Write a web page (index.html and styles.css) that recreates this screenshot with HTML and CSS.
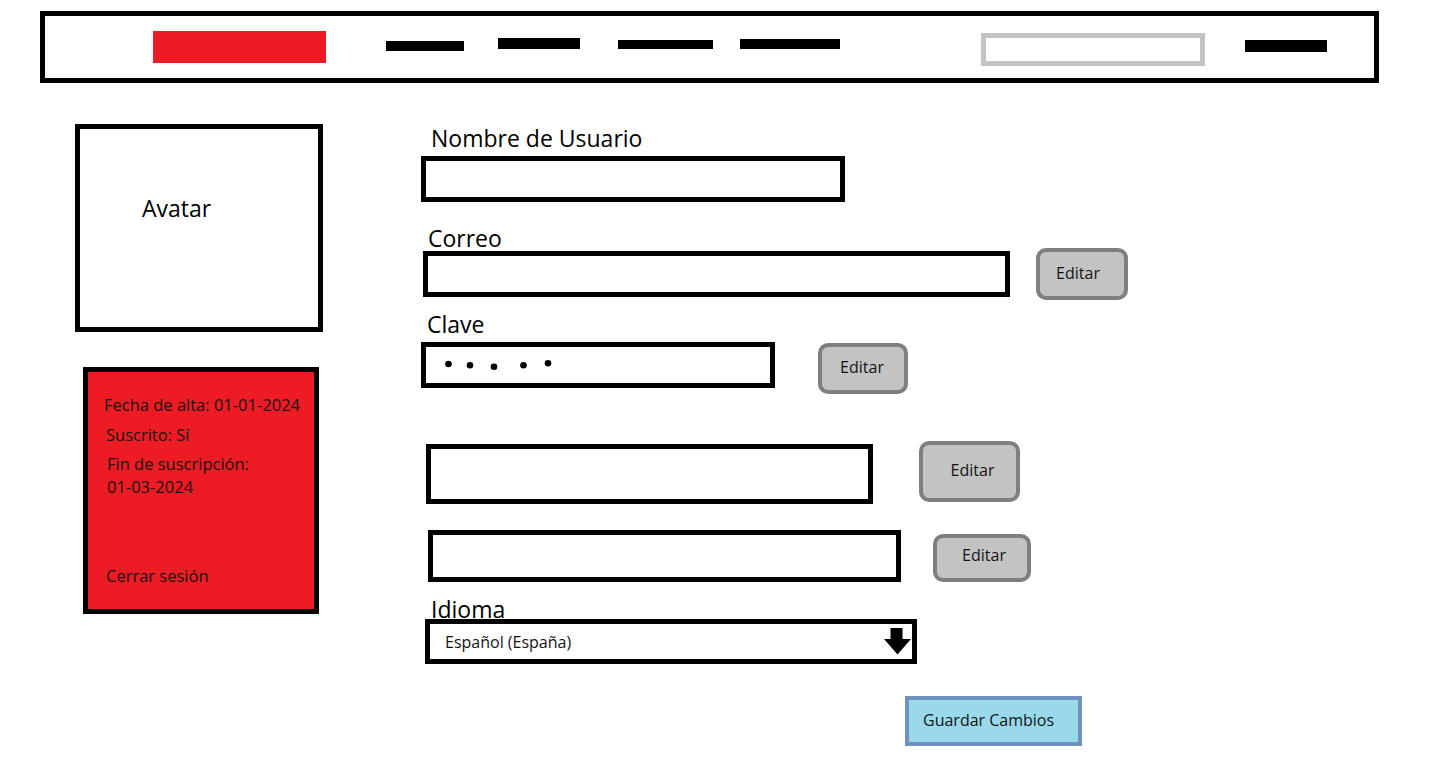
FILE: index.html
```html
<!DOCTYPE html>
<html lang="es">
<head>
<meta charset="utf-8">
<title>Perfil de usuario</title>
<link rel="stylesheet" href="styles.css">
</head>
<body>
<header class="topbar">
  <div class="logo"></div>
  <div class="nav nav-1"></div>
  <div class="nav nav-2"></div>
  <div class="nav nav-3"></div>
  <div class="nav nav-4"></div>
  <div class="search"></div>
  <div class="nav nav-5"></div>
</header>

<main class="page">
  <aside class="sidebar">
    <div class="avatar">Avatar</div>
    <div class="info">
      <div class="info-line l1">Fecha de alta: 01-01-2024</div>
      <div class="info-line l2">Suscrito: Sí</div>
      <div class="info-line l3">Fin de suscripción:<br>01-03-2024</div>
      <div class="info-line logout">Cerrar sesión</div>
    </div>
  </aside>

  <section class="form">
    <div class="label lbl-user">Nombre de Usuario</div>
    <div class="field f-user"></div>

    <div class="label lbl-mail">Correo</div>
    <div class="row row-mail">
      <div class="field f-mail"></div>
      <div class="btn b-mail">Editar</div>
    </div>

    <div class="label lbl-pass">Clave</div>
    <div class="row row-pass">
      <div class="field f-pass">
        <svg class="dots" width="110" height="12" viewBox="0 0 110 12">
          <circle cx="3.5" cy="5" r="3.3"/>
          <circle cx="25" cy="6.3" r="3.3"/>
          <circle cx="49" cy="7.7" r="3.3"/>
          <circle cx="78.5" cy="6.3" r="3.3"/>
          <circle cx="103" cy="4.3" r="3.3"/>
        </svg>
      </div>
      <div class="btn b-pass">Editar</div>
    </div>

    <div class="row row-4">
      <div class="field f-4"></div>
      <div class="btn b-4">Editar</div>
    </div>

    <div class="row row-5">
      <div class="field f-5"></div>
      <div class="btn b-5">Editar</div>
    </div>

    <div class="label lbl-lang">Idioma</div>
    <div class="select">
      <span class="select-text">Español (España)</span>
      <svg class="arrow" width="27" height="27" viewBox="0 0 27 27">
        <rect x="6.5" y="0" width="12" height="12"/>
        <polygon points="0,11 27,11 13.5,26.5"/>
      </svg>
    </div>

    <div class="save">Guardar Cambios</div>
  </section>
</main>
</body>
</html>
```

FILE: styles.css
```css
* { box-sizing: border-box; }

body {
  margin: 0;
  background: #fff;
  color: #000;
  font-family: "Open Sans", "Noto Sans", sans-serif;
}

/* ---------- header ---------- */
.topbar {
  margin: 11px 0 0 40px;
  width: 1339px;
  height: 72px;
  border: 5px solid #000;
  display: flex;
  align-items: flex-start;
}
.logo {
  margin: 15px 0 0 108px;
  width: 173px;
  height: 32px;
  background: #ed1c24;
}
.nav { background: #000; }
.nav-1 { margin: 25px 0 0 60px; width: 78px; height: 10px; }
.nav-2 { margin: 22px 0 0 34px; width: 82px; height: 11px; }
.nav-3 { margin: 24px 0 0 38px; width: 95px; height: 9px; }
.nav-4 { margin: 23px 0 0 27px; width: 100px; height: 10px; }
.search {
  margin: 17px 0 0 141px;
  width: 224px;
  height: 33px;
  border: 5px solid #c3c3c3;
}
.nav-5 { margin: 24px 0 0 40px; width: 82px; height: 12px; }

/* ---------- page ---------- */
.page {
  display: flex;
  align-items: flex-start;
  margin-top: 41px;
}

.sidebar {
  margin-left: 75px;
  width: 248px;
  display: flex;
  flex-direction: column;
}
.avatar {
  width: 248px;
  height: 208px;
  border: 5px solid #000;
  padding: 65px 0 0 62px;
  font-size: 23px;
  line-height: 28px;
}
.info {
  margin: 35px 0 0 8px;
  width: 236px;
  height: 247px;
  border: 5px solid #000;
  background: #ed1c24;
  color: #141414;
  font-size: 16.5px;
  line-height: 20px;
  padding: 23px 0 23px 16px;
  display: flex;
  flex-direction: column;
}
.info-line { white-space: nowrap; }
.l2 { margin: 10px 0 0 2px; }
.l3 { margin: 7px 0 0 3px; line-height: 23px; }
.logout { margin: auto 0 0 2px; }

/* ---------- form ---------- */
.form {
  margin-left: 98px;
  padding-top: 2px;
  display: flex;
  flex-direction: column;
  align-items: flex-start;
}
.label {
  font-size: 23px;
  line-height: 24px;
  white-space: nowrap;
}
.field {
  border: 5px solid #000;
  background: #fff;
}
.row {
  display: flex;
}
.btn {
  background: #c3c3c3;
  border: 4px solid #7f7f7f;
  border-radius: 10px;
  font-size: 16px;
  color: #141414;
  display: flex;
  align-items: center;
  justify-content: center;
  padding: 0 4px 3px 0;
}

.lbl-user { margin-left: 10px; }
.f-user { margin-top: 6px; width: 424px; height: 46px; }

.lbl-mail { margin: 24px 0 0 7px; }
.row-mail { margin: -2px 0 0 2px; align-items: center; gap: 26px; }
.f-mail { width: 587px; height: 46px; }
.b-mail { width: 92px; height: 52px; padding-right: 8px; }

.lbl-pass { margin: 12px 0 0 6px; }
.row-pass { margin-top: 6px; align-items: flex-start; gap: 43px; }
.f-pass {
  width: 354px;
  height: 46px;
  display: flex;
  align-items: center;
  padding-left: 19px;
}
.dots { fill: #000; }
.b-pass { margin-top: 1px; width: 90px; height: 51px; padding-right: 2px; }

.row-4 { margin: 47px 0 0 5px; align-items: flex-start; gap: 46px; }
.f-4 { margin-top: 3px; width: 447px; height: 60px; }
.b-4 { width: 101px; height: 61px; padding: 0 0 3px 6px; }

.row-5 { margin: 26px 0 0 7px; align-items: flex-start; gap: 32px; }
.f-5 { width: 473px; height: 52px; }
.b-5 { margin-top: 4px; width: 98px; height: 48px; padding: 0 0 7px 4px; }

.lbl-lang { margin: 15px 0 0 10px; }
.select {
  margin: -2px 0 0 4px;
  width: 492px;
  height: 45px;
  border: 5px solid #000;
  display: flex;
  align-items: center;
  padding: 0 1px 0 15px;
}
.select-text { font-size: 16px; color: #141414; }
.arrow { margin-left: auto; fill: #000; }

.save {
  margin: 32px 0 0 484px;
  width: 177px;
  height: 50px;
  background: #99d9ea;
  border: 4px solid #7092be;
  font-size: 16px;
  color: #141414;
  display: flex;
  align-items: center;
  padding: 0 0 2px 14px;
}
```
